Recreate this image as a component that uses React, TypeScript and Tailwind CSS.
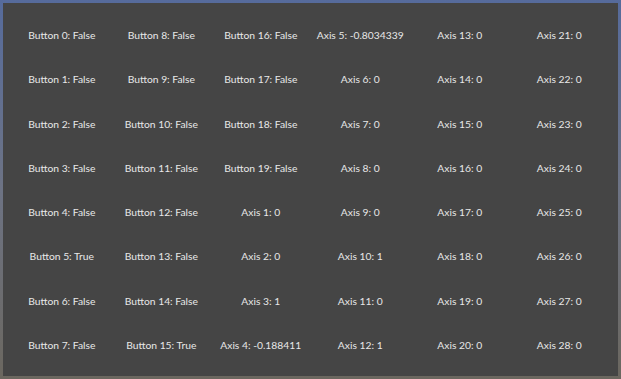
const columns: string[][] = [
  Array.from({ length: 8 }, (_, i) => `Button ${i}: ${i === 5 ? "True" : "False"}`),
  Array.from({ length: 8 }, (_, i) => `Button ${i + 8}: ${i + 8 === 15 ? "True" : "False"}`),
  [
    "Button 16: False",
    "Button 17: False",
    "Button 18: False",
    "Button 19: False",
    "Axis 1: 0",
    "Axis 2: 0",
    "Axis 3: 1",
    "Axis 4: -0.188411",
  ],
  ["Axis 5: -0.8034339", "Axis 6: 0", "Axis 7: 0", "Axis 8: 0", "Axis 9: 0", "Axis 10: 1", "Axis 11: 0", "Axis 12: 1"],
  Array.from({ length: 8 }, (_, i) => `Axis ${i + 13}: 0`),
  Array.from({ length: 8 }, (_, i) => `Axis ${i + 21}: 0`),
]

const App = () => {
  return (
    <div className="w-[621px] h-[379px] bg-gradient-to-b from-[#566b9c] via-[#6d7384] to-[#6b675f] pt-[3px] pl-[3px] pr-[3px] pb-[3px] overflow-hidden">
      <div
        className="h-full bg-[#454545] px-[9px] pt-[13px] pb-[9px] grid grid-cols-6 text-[10.3px] text-[#e8e8e8]"
        style={{ fontFamily: 'Lato, "Noto Sans", sans-serif' }}
      >
        {columns.map((col, c) => (
          <div key={c} className="flex flex-col">
            {col.map((label) => (
              <div key={label} className="h-[44.3px] flex items-start justify-center pt-[14px] leading-none whitespace-nowrap">
                {label}
              </div>
            ))}
          </div>
        ))}
      </div>
    </div>
  )
}

export default App
